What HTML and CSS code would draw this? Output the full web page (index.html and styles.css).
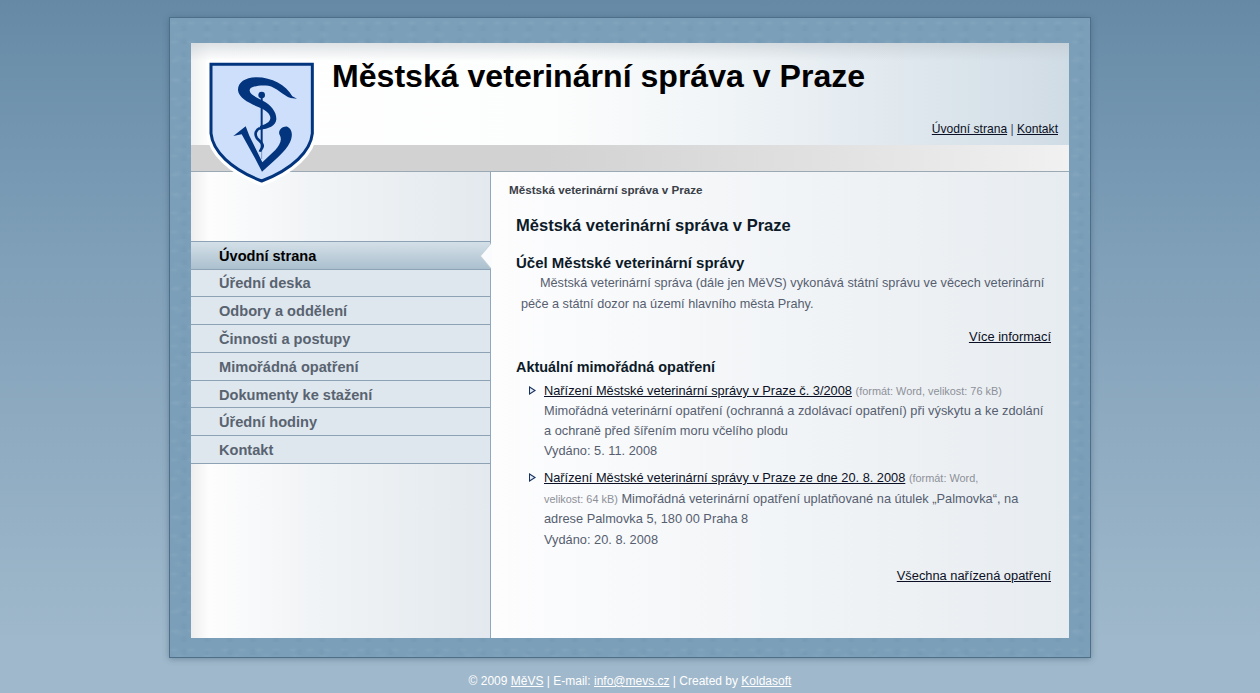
FILE: index.html
```html
<!DOCTYPE html>
<html lang="cs">
<head>
<meta charset="utf-8">
<title>Městská veterinární správa v Praze</title>
<link rel="stylesheet" href="styles.css">
</head>
<body>
<div class="frame">
  <div class="sheet">
    <header class="header">
      <div class="banner">
        <h1 class="site-title">Městská veterinární správa v Praze</h1>
        <div class="toplinks"><a href="#">Úvodní strana</a> | <a href="#">Kontakt</a></div>
      </div>
      <div class="band"></div>
      <svg class="shield" viewBox="0 0 375 405" width="125" height="135" aria-hidden="true">
        <path d="M30 25H340V235C335 290 280 345 185 382C90 345 35 290 30 235Z" fill="#fff" stroke="#fff" stroke-width="22" stroke-linejoin="round"/>
        <path d="M33 28H337V235C332 288 278 342 185 378C92 342 38 288 33 235Z" fill="#cddffb" stroke="#03357f" stroke-width="9"/>
        <path d="M185 120V282" stroke="#03357f" stroke-width="6" fill="none"/>
        <path d="M185 282V312" stroke="#7f9bc8" stroke-width="3" fill="none"/>
        <circle cx="185" cy="120" r="10" fill="#03357f"/>
        <path d="M272 129L291 131L277 124C258 90 215 67 170 67C135 67 113 83 114 106C116 130 150 146 180 158C200 167 212 178 211 190C210 203 195 208 180 213L180 224C205 222 228 213 229 193C230 170 212 150 190 138C170 127 147 118 149 105C151 94 180 89 205 92C228 96 250 122 272 129Z" fill="#03357f"/>
        <path d="M180 219C168 224 163 236 170 248C177 258 190 264 188 274C186 282 181 285 180 290" fill="none" stroke="#03357f" stroke-width="8"/>
        <path d="M100 243L137 214L148 242L187 322L226 285C240 268 248 255 238 238C234 224 250 212 262 215C276 220 280 240 270 262C255 292 225 315 186 350L165 310L125 238Z" fill="#03357f"/>
      </svg>
    </header>
    <div class="columns">
      <aside class="sidebar">
        <ul class="menu">
          <li class="menu-item current"><a href="#">Úvodní strana</a></li>
          <li class="menu-item short"><a href="#">Úřední deska</a></li>
          <li class="menu-item"><a href="#">Odbory a oddělení</a></li>
          <li class="menu-item"><a href="#">Činnosti a postupy</a></li>
          <li class="menu-item"><a href="#">Mimořádná opatření</a></li>
          <li class="menu-item short low"><a href="#">Dokumenty ke stažení</a></li>
          <li class="menu-item"><a href="#">Úřední hodiny</a></li>
          <li class="menu-item"><a href="#">Kontakt</a></li>
        </ul>
      </aside>
      <main class="content">
        <div class="crumb">Městská veterinární správa v Praze</div>
        <div class="body-text">
          <h2 class="page-title">Městská veterinární správa v Praze</h2>
          <h3 class="sec-title first">Účel Městské veterinární správy</h3>
          <p class="intro">Městská veterinární správa (dále jen MěVS) vykonává státní správu ve věcech veterinární péče a státní dozor na území hlavního města Prahy.</p>
          <p class="more"><a href="#">Více informací</a></p>
          <h3 class="sec-title second">Aktuální mimořádná opatření</h3>
          <ul class="news">
            <li class="news-item"><a href="#">Nařízení Městské veterinární správy v Praze č. 3/2008</a> <small>(formát: Word, velikost: 76 kB)</small><br>Mimořádná veterinární opatření (ochranná a zdolávací opatření) při výskytu a ke zdolání a ochraně před šířením moru včelího plodu<br>Vydáno: 5. 11. 2008</li>
            <li class="news-item tall"><a href="#">Nařízení Městské veterinární správy v Praze ze dne 20. 8. 2008</a> <small>(formát: Word,</small> <small>velikost:&nbsp;64&nbsp;kB)</small> Mimořádná veterinární opatření uplatňované na útulek „Palmovka“, na adrese Palmovka 5, 180&nbsp;00 Praha 8<br>Vydáno: 20. 8. 2008</li>
          </ul>
          <p class="more all"><a href="#">Všechna nařízená opatření</a></p>
        </div>
      </main>
    </div>
  </div>
</div>
<footer class="footer">© 2009 <a href="#">MěVS</a> | E-mail: <a href="#">info@mevs.cz</a> | Created by <a href="#">Koldasoft</a></footer>
</body>
</html>
```

FILE: styles.css
```css
* { box-sizing: border-box; }
html, body { margin: 0; padding: 0; height: 100%; }
body {
  background: linear-gradient(180deg, #668aa6 0, #7f9fb8 250px, #9fb8cb 640px);
  font-family: "Liberation Sans", Arial, sans-serif;
  font-size: 12px;
  color: #565e70;
  overflow: hidden;
  padding-top: 17px;
}
a { color: #0b1024; }
h1, h2, h3, p, ul { margin: 0; padding: 0; list-style: none; }

.frame {
  width: 922px;
  height: 641px;
  margin: 0 auto;
  padding: 25px 21px 19px;
  background-color: #7b9fb9;
  background-image:
    radial-gradient(ellipse 6px 3px at 4px 5px, rgba(255, 255, 255, .05), transparent),
    radial-gradient(ellipse 5px 6px at 14px 11px, rgba(40, 80, 110, .06), transparent),
    radial-gradient(ellipse 7px 4px at 9px 17px, rgba(255, 255, 255, .04), transparent);
  background-size: 17px 19px, 23px 13px, 29px 23px;
  border: 1px solid #4f6f88;
  box-shadow: 0 1px 6px rgba(50, 80, 105, .45);
}
.sheet { width: 878px; height: 595px; display: flex; flex-direction: column; background: #fff; }

.header { position: relative; height: 129px; flex: none; border-bottom: 1px solid #9aa9b4; }
.banner {
  height: 102px;
  padding: 0 11px 0 141px;
  display: flex;
  flex-direction: column;
  background:
    linear-gradient(180deg, rgba(190, 198, 204, .5) 0, rgba(255, 255, 255, 0) 18px),
    linear-gradient(90deg, #f0f1f2 0, #fff 20px, #fcfdfd 360px, #f1f5f7 520px, #e1e9ef 700px, #d0dce5 878px);
}
.site-title { font-size: 32.1px; line-height: 36px; margin-top: 15px; color: #000; font-weight: bold; white-space: nowrap; }
.toplinks { margin-top: auto; margin-bottom: 9px; text-align: right; font-size: 12.1px; line-height: 14px; color: #3c4a66; }
.band { height: 26px; background: linear-gradient(90deg, #d2d2d2 0, #d2d2d2 350px, #e2e2e2 650px, #f1f1f1 878px); }
.shield { position: absolute; left: 9px; top: 12px; }

.columns { flex: 1; display: flex; min-height: 0; }
.sidebar {
  width: 300px;
  flex: none;
  padding-top: 69px;
  border-right: 1px solid #8ea8bd;
  background: linear-gradient(90deg, #eeeeee 0, #fdfdfd 18px, #f1f4f6 120px, #e3e9ee 299px);
}
.menu { border-top: 1px solid #8da3b5; }
.menu-item {
  height: 28px;
  padding-left: 28px;
  background: #dee7ee;
  border-bottom: 1px solid #8da3b5;
  font-size: 14.6px;
  font-weight: bold;
  line-height: 28px;
}
.menu-item.short { height: 27px; line-height: 26px; }
.menu-item.short.low { line-height: 28px; }
.menu-item a { color: #596370; text-decoration: none; }
.menu-item.current { position: relative; background: linear-gradient(180deg, #d4e0e8 0, #abc0ce 100%); }
.menu-item.current a { color: #000; }
.menu-item.current::before,
.menu-item.current::after {
  content: "";
  position: absolute;
  right: -1px;
  top: 1px;
  width: 11px;
  height: 26px;
  clip-path: polygon(100% 0, 0 50%, 100% 100%);
}
.menu-item.current::before { background: #c6d2da; }
.menu-item.current::after { right: -2px; background: #fafbfc; }

.content {
  flex: 1;
  padding: 11px 18px 0;
  background: linear-gradient(90deg, #fdfdfe 0, #f5f7f9 200px, #e7ecf0 578px);
}
.crumb { font-size: 11.65px; font-weight: bold; line-height: 13px; color: #3a4048; }
.body-text { padding: 0 0 0 7px; }
.page-title { font-size: 16.55px; line-height: 20px; margin-top: 20px; color: #0d1a28; }
.sec-title { font-size: 14.4px; line-height: 17px; color: #0d1a28; }
.sec-title.first { font-size: 15px; margin-top: 18px; }
.sec-title.second { margin-top: 15px; }
.intro { font-size: 12.7px; line-height: 21px; text-indent: 19px; padding: 0 5px; margin-top: 2px; width: 535px; }
.more { text-align: right; font-size: 12.85px; line-height: 14px; margin-top: 15px; }
.news { margin-top: 5px; }
.news-item {
  position: relative;
  width: 535px;
  padding-left: 28px;
  margin-bottom: 7px;
  line-height: 20px;
  font-size: 12.8px;
}
.news-item.tall { line-height: 20.6px; }
.news-item::before,
.news-item::after {
  content: "";
  position: absolute;
  clip-path: polygon(0 0, 100% 50%, 0 100%);
}
.news-item::before { left: 13px; top: 5px; width: 7px; height: 9px; background: #17305f; }
.news-item::after { left: 14px; top: 7px; width: 4px; height: 5px; background: #e4ecf6; }
.news-item small { font-size: 10.9px; color: #8d9099; }
.more.all { margin-top: 19px; }

.footer { height: 18px; margin-top: 14px; text-align: center; color: #fff; font-size: 12px; line-height: 18px; }
.footer a { color: #fff; }
```
